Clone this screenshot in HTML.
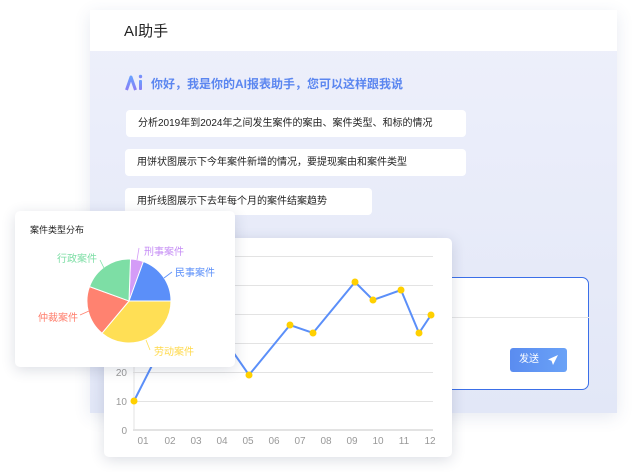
<!DOCTYPE html>
<html><head><meta charset="utf-8"><style>
*{margin:0;padding:0;box-sizing:border-box}
body{width:638px;height:472px;background:#fff;position:relative;overflow:hidden;font-family:"Liberation Sans","Noto Sans CJK SC",sans-serif}
.abs{position:absolute}
.main{left:90px;top:10px;width:527px;height:403px;background:linear-gradient(180deg,#eef0fb,#e2e7f7);box-shadow:0 4px 16px rgba(60,80,140,.12)}
.hdr{left:0;top:0;width:527px;height:41px;background:#fff;font-size:15px;color:#222;padding:10px 0 0 34px}
.hello{left:61px;top:65px;font-size:12px;color:#5b86f0;font-weight:bold}
.chip{background:#fff;border-radius:4px;font-size:10px;color:#222;height:27px;line-height:27px;padding-left:12px}
.card{background:#fff;border-radius:5px;box-shadow:0 3px 14px rgba(40,50,90,.16)}
.yl{font-size:10px;color:#999;width:20px;text-align:right}
.xl{font-size:10px;color:#999}
</style></head><body>
<div class="abs main">
 <div class="abs hdr">AI助手</div>
 <svg class="abs" style="left:35px;top:64px" width="20" height="18" viewBox="0 0 20 18"><defs><linearGradient id="g" x1="0" y1="0" x2="0" y2="1"><stop offset="0" stop-color="#6aa0ff"/><stop offset="1" stop-color="#8a7cf5"/></linearGradient></defs><path d="M1.5 16 L6 3 L10.5 16" fill="none" stroke="url(#g)" stroke-width="3" stroke-linejoin="round"/><rect x="14" y="6" width="3" height="10" rx="1" fill="url(#g)"/><circle cx="15.5" cy="2.5" r="1.7" fill="url(#g)"/></svg>
 <div class="abs hello">你好，我是你的AI报表助手，您可以这样跟我说</div>
 <div class="abs chip" style="left:36px;top:100px;width:340px">分析2019年到2024年之间发生案件的案由、案件类型、和标的情况</div>
 <div class="abs chip" style="left:35px;top:139px;width:341px">用饼状图展示下今年案件新增的情况，要提现案由和案件类型</div>
 <div class="abs chip" style="left:35px;top:178px;width:247px">用折线图展示下去年每个月的案件结案趋势</div>
 <div class="abs" style="left:320px;top:267px;width:179px;height:113px;background:#fff;border:1px solid #3b6fe8;border-radius:7px">
  <div class="abs" style="left:0;top:39px;width:178px;height:1px;background:#e6e6e6"></div>
  <div class="abs" style="left:99px;top:70px;width:57px;height:24px;border-radius:3px;background:linear-gradient(90deg,#5a8cf0,#6aa2f7);color:#fff;font-size:10px;line-height:24px;padding-left:9px">发送
   <svg class="abs" style="left:37px;top:6px" width="12" height="12" viewBox="0 0 12 12"><path d="M11 1 L1 5.5 L4.5 6.8 L6 11 Z" fill="#fff"/></svg></div>
 </div>
</div>
<div class="abs card" style="left:104px;top:238px;width:348px;height:219px"></div>
<svg class="abs" style="left:0;top:0" width="638" height="472">
 <g stroke="#e3e3e3" stroke-width="1">
  <line x1="133" y1="256.5" x2="433" y2="256.5"/><line x1="133" y1="285.5" x2="433" y2="285.5"/><line x1="133" y1="314.5" x2="433" y2="314.5"/><line x1="133" y1="343.5" x2="433" y2="343.5"/><line x1="133" y1="372.5" x2="433" y2="372.5"/><line x1="133" y1="401.5" x2="433" y2="401.5"/>
  <line x1="133" y1="430" x2="433" y2="430" stroke-width="2"/><line x1="134" y1="256" x2="134" y2="430"/>
 </g>
 <polyline points="134,401 170,330 215,320 233,352 249,375 290,325 313,333 355,282 373,300 401,290 419,333 431,315" fill="none" stroke="#5b8ff9" stroke-width="2"/>
 <g fill="#ffd000"><circle cx="134" cy="401" r="3.5"/><circle cx="249" cy="375" r="3.5"/><circle cx="290" cy="325" r="3.5"/><circle cx="313" cy="333" r="3.5"/><circle cx="355" cy="282" r="3.5"/><circle cx="373" cy="300" r="3.5"/><circle cx="401" cy="290" r="3.5"/><circle cx="419" cy="333" r="3.5"/><circle cx="431" cy="315" r="3.5"/></g>
 <g font-size="10" fill="#999" font-family="Liberation Sans,sans-serif">
  <text x="127" y="434" text-anchor="end">0</text><text x="127" y="405" text-anchor="end">10</text><text x="127" y="376" text-anchor="end">20</text>
  <text x="143" y="444" text-anchor="middle">01</text><text x="170" y="444" text-anchor="middle">02</text><text x="196" y="444" text-anchor="middle">03</text><text x="222" y="444" text-anchor="middle">04</text><text x="248" y="444" text-anchor="middle">05</text><text x="274" y="444" text-anchor="middle">06</text><text x="300" y="444" text-anchor="middle">07</text><text x="326" y="444" text-anchor="middle">08</text><text x="352" y="444" text-anchor="middle">09</text><text x="378" y="444" text-anchor="middle">10</text><text x="404" y="444" text-anchor="middle">11</text><text x="430" y="444" text-anchor="middle">12</text>
 </g>
</svg>
<div class="abs card" style="left:15px;top:211px;width:220px;height:156px"></div>
<div class="abs" style="left:30px;top:223px;font-size:9px;color:#222">案件类型分布</div>
<svg class="abs" style="left:0;top:0" width="638" height="472" font-family="Liberation Sans,Noto Sans CJK SC,sans-serif" font-size="10">
 <g stroke="#fff" stroke-width="1">
  <path d="M129 301 L130.5 259 A42 42 0 0 1 143.4 261.5 Z" fill="#d49cf7"/>
  <path d="M129 301 L143.4 261.5 A42 42 0 0 1 171 301 Z" fill="#5b8ff9"/>
  <path d="M129 301 L171 301 A42 42 0 0 1 102 333.2 Z" fill="#ffdf55"/>
  <path d="M129 301 L102 333.2 A42 42 0 0 1 89.5 286.6 Z" fill="#ff8270"/>
  <path d="M129 301 L89.5 286.6 A42 42 0 0 1 130.5 259 Z" fill="#7ddea5"/>
 </g>
 <g fill="none" stroke-width="0.8">
  <path d="M137 260 L139 248" stroke="#d49cf7"/>
  <path d="M164 278 L172 272" stroke="#5b8ff9"/>
  <path d="M146 340 L150 350" stroke="#ffdf55"/>
  <path d="M89 311 L80 315" stroke="#ff8270"/>
  <path d="M104 268 L100 260" stroke="#7ddea5"/>
 </g>
 <text x="144" y="255" fill="#c58cf5">刑事案件</text>
 <text x="175" y="276" fill="#5b8ff9">民事案件</text>
 <text x="154" y="355" fill="#ffd94a">劳动案件</text>
 <text x="38" y="321" fill="#ff7d6b">仲裁案件</text>
 <text x="57" y="262" fill="#7ddea5">行政案件</text>
</svg>
</body></html>
